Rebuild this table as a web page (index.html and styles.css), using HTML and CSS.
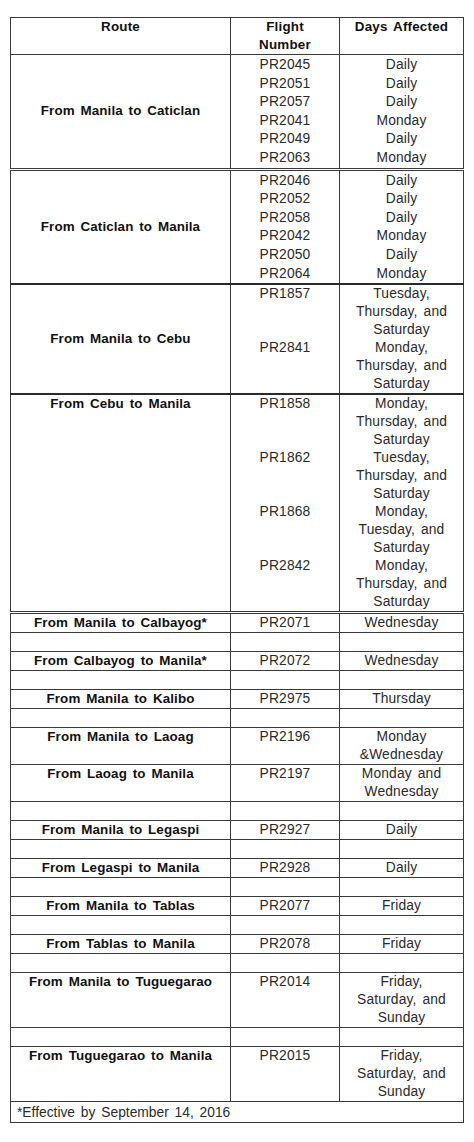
FILE: index.html
```html
<!DOCTYPE html>
<html>
<head>
<meta charset="utf-8">
<link rel="stylesheet" href="styles.css">
</head>
<body>
<table class="sched">
<colgroup><col class="c1"><col class="c2"><col class="c3"></colgroup>
<thead>
<tr class="head"><th>Route</th><th>Flight<br>Number</th><th>Days Affected</th></tr>
</thead>
<tbody>
<tr class="sec l19 dbl">
<td class="route mid">From Manila to Caticlan</td>
<td>PR2045<br>PR2051<br>PR2057<br>PR2041<br>PR2049<br>PR2063</td>
<td>Daily<br>Daily<br>Daily<br>Monday<br>Daily<br>Monday</td>
</tr>
<tr class="sec l19 thick">
<td class="route mid">From Caticlan to Manila</td>
<td>PR2046<br>PR2052<br>PR2058<br>PR2042<br>PR2050<br>PR2064</td>
<td>Daily<br>Daily<br>Daily<br>Monday<br>Daily<br>Monday</td>
</tr>
<tr class="sec thick">
<td class="route mid">From Manila to Cebu</td>
<td>PR1857<br><br><br>PR2841<br><br><br></td>
<td>Tuesday,<br>Thursday, and<br>Saturday<br>Monday,<br>Thursday, and<br>Saturday</td>
</tr>
<tr class="sec dbl">
<td class="route">From Cebu to Manila</td>
<td>PR1858<br><br><br>PR1862<br><br><br>PR1868<br><br><br>PR2842<br><br><br></td>
<td>Monday,<br>Thursday, and<br>Saturday<br>Tuesday,<br>Thursday, and<br>Saturday<br>Monday,<br>Tuesday, and<br>Saturday<br>Monday,<br>Thursday, and<br>Saturday</td>
</tr>
<tr><td class="route">From Manila to Calbayog*</td><td>PR2071</td><td>Wednesday</td></tr>
<tr class="empty"><td></td><td></td><td></td></tr>
<tr><td class="route">From Calbayog to Manila*</td><td>PR2072</td><td>Wednesday</td></tr>
<tr class="empty"><td></td><td></td><td></td></tr>
<tr><td class="route">From Manila to Kalibo</td><td>PR2975</td><td>Thursday</td></tr>
<tr class="empty"><td></td><td></td><td></td></tr>
<tr><td class="route">From Manila to Laoag</td><td>PR2196</td><td>Monday<br>&amp;Wednesday</td></tr>
<tr><td class="route">From Laoag to Manila</td><td>PR2197</td><td>Monday and<br>Wednesday</td></tr>
<tr class="empty"><td></td><td></td><td></td></tr>
<tr><td class="route">From Manila to Legaspi</td><td>PR2927</td><td>Daily</td></tr>
<tr class="empty"><td></td><td></td><td></td></tr>
<tr><td class="route">From Legaspi to Manila</td><td>PR2928</td><td>Daily</td></tr>
<tr class="empty"><td></td><td></td><td></td></tr>
<tr><td class="route">From Manila to Tablas</td><td>PR2077</td><td>Friday</td></tr>
<tr class="empty"><td></td><td></td><td></td></tr>
<tr><td class="route">From Tablas to Manila</td><td>PR2078</td><td>Friday</td></tr>
<tr class="empty"><td></td><td></td><td></td></tr>
<tr><td class="route">From Manila to Tuguegarao</td><td>PR2014</td><td>Friday,<br>Saturday, and<br>Sunday</td></tr>
<tr class="empty"><td></td><td></td><td></td></tr>
<tr><td class="route">From Tuguegarao to Manila</td><td>PR2015</td><td>Friday,<br>Saturday, and<br>Sunday</td></tr>
<tr><td class="note" colspan="3">*Effective by September 14, 2016</td></tr>
</tbody>
</table>
</body>
</html>
```
FILE: styles.css
```css
html, body {
  margin: 0;
  padding: 0;
  background: #ffffff;
}
body {
  font-family: "Liberation Sans", Arial, sans-serif;
  color: #2a2a2a;
}
.sched {
  margin: 17px 0 0 10px;
  border-collapse: collapse;
  table-layout: fixed;
  width: 453px;
  border: 1px solid #3a3a3a;
  font-size: 13.8px;
  line-height: 18px;
  word-spacing: 2px;
  letter-spacing: 0.15px;
}
.c1 { width: 220px; }
.c2 { width: 109px; }
.c3 { width: 124px; }
.sched th,
.sched td {
  border: 1px solid #3a3a3a;
  padding: 0;
  text-align: center;
  vertical-align: top;
  font-weight: normal;
}
.sched th {
  font-weight: bold;
  color: #111111;
  font-size: 13.4px;
  letter-spacing: 0.2px;
}
.sched td.route {
  font-weight: bold;
  color: #111111;
  font-size: 13.4px;
  letter-spacing: 0.1px;
}
.sched td.mid {
  vertical-align: middle;
}
.l19 td {
  line-height: 18.6px;
  padding-top: 1px;
}
.dbl td {
  border-bottom: 3px double #3a3a3a;
}
.thick td {
  border-bottom: 2px solid #2a2a2a;
}
.empty td {
  height: 18px;
}
.sched td.note {
  text-align: left;
  padding-left: 6px;
  padding-top: 2px;
  letter-spacing: 0;
}
```
